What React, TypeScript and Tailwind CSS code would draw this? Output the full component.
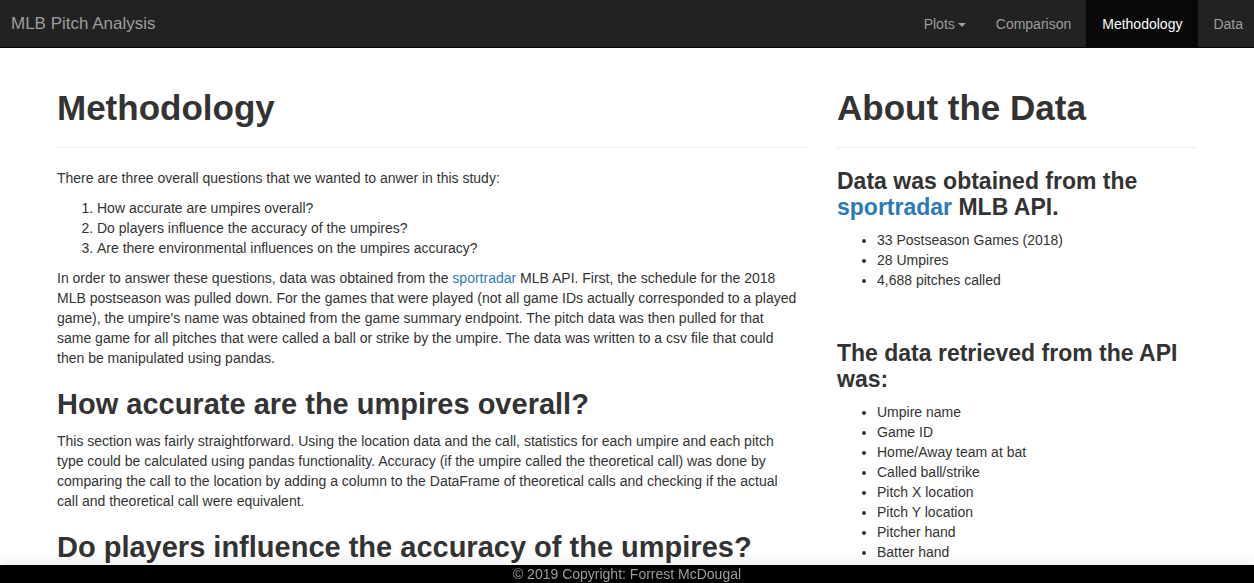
const font = "font-['Liberation_Sans',Arial,sans-serif]";

function Navbar() {
  return (
    <nav className="flex h-[48px] items-stretch justify-between border-b border-[#080808] bg-[#222]">
      <a className="flex items-center pl-[11px] text-[17px] text-[#9d9d9d]">MLB Pitch Analysis</a>
      <ul className="flex items-stretch text-[14px]">
        <li className="flex items-center px-[15px] text-[#9d9d9d]">
          Plots
          <span className="ml-[3px] mt-[2px] inline-block h-0 w-0 border-x-[4px] border-t-[4px] border-x-transparent border-t-[#9d9d9d]" />
        </li>
        <li className="flex items-center px-[15px] text-[#9d9d9d]">Comparison</li>
        <li className="flex items-center bg-[#080808] px-[16px] text-white">Methodology</li>
        <li className="flex items-center pl-[15px] pr-[11px] text-[#9d9d9d]">Data</li>
      </ul>
    </nav>
  );
}

function PageHeader({ title }: { title: string }) {
  return (
    <div className="mt-[40px] mb-[20px] border-b border-[#eee] pb-[19px]">
      <h1 className="text-[35px] font-bold leading-[40px]">{title}</h1>
    </div>
  );
}

const Link = ({ children }: { children: React.ReactNode }) => (
  <a className="text-[#337ab7]">{children}</a>
);

export default function App() {
  return (
    <div className={`${font} min-h-screen bg-white text-[14px] leading-[20px] text-[#333]`}>
      <Navbar />

      <div className="mx-auto w-[1170px] px-[15px]">
        <div className="-mx-[15px] flex">
          {/* left: methodology write-up */}
          <div className="w-[780px] px-[15px]">
            <PageHeader title="Methodology" />
            <p>There are three overall questions that we wanted to anwer in this study:</p>
            <ol className="mt-[10px] list-decimal pl-[40px]">
              <li>How accurate are umpires overall?</li>
              <li>Do players influence the accuracy of the umpires?</li>
              <li>Are there environmental influences on the umpires accuracy?</li>
            </ol>
            <p className="mt-[10px]">
              In order to answer these questions, data was obtained from the <Link>sportradar</Link> MLB API. First, the schedule for the 2018
              <br />
              MLB postseason was pulled down. For the games that were played (not all game IDs actually corresponded to a played
              <br />
              game), the umpire's name was obtained from the game summary endpoint. The pitch data was then pulled for that
              <br />
              same game for all pitches that were called a ball or strike by the umpire. The data was written to a csv file that could
              <br />
              then be manipulated using pandas.
            </p>
            <h2 className="mt-[20px] text-[29px] font-bold leading-[33px]">How accurate are the umpires overall?</h2>
            <p className="mt-[10px]">
              This section was fairly straightforward. Using the location data and the call, statistics for each umpire and each pitch
              <br />
              type could be calculated using pandas functionality. Accuracy (if the umpire called the theoretical call) was done by
              <br />
              comparing the call to the location by adding a column to the DataFrame of theoretical calls and checking if the actual
              <br />
              call and theoretical call were equivalent.
            </p>
            <h2 className="mt-[20px] text-[29px] font-bold leading-[33px]">Do players influence the accuracy of the umpires?</h2>
          </div>

          {/* right: data summary */}
          <div className="w-[390px] px-[15px]">
            <PageHeader title="About the Data" />
            <h3 className="text-[23px] font-bold leading-[26px]">
              Data was obtained from the
              <br />
              <a className="text-[#2a7ab7]">sportradar</a> MLB API.
            </h3>
            <ul className="mt-[10px] list-disc pl-[40px]">
              <li>33 Postseason Games (2018)</li>
              <li>28 Umpires</li>
              <li>4,688 pitches called</li>
            </ul>
            <h3 className="mt-[50px] text-[23px] font-bold leading-[26px]">The data retrieved from the API was:</h3>
            <ul className="mt-[10px] list-disc pl-[40px]">
              <li>Umpire name</li>
              <li>Game ID</li>
              <li>Home/Away team at bat</li>
              <li>Called ball/strike</li>
              <li>Pitch X location</li>
              <li>Pitch Y location</li>
              <li>Pitcher hand</li>
              <li>Batter hand</li>
            </ul>
          </div>
        </div>
      </div>

      <footer className="fixed inset-x-0 bottom-0 h-[18px] bg-black text-center text-[14px] leading-[18px] text-[#9d9d9d] shadow-[0_-6px_12px_rgba(0,0,0,0.06)]">
        © 2019 Copyright: Forrest McDougal
      </footer>
    </div>
  );
}
